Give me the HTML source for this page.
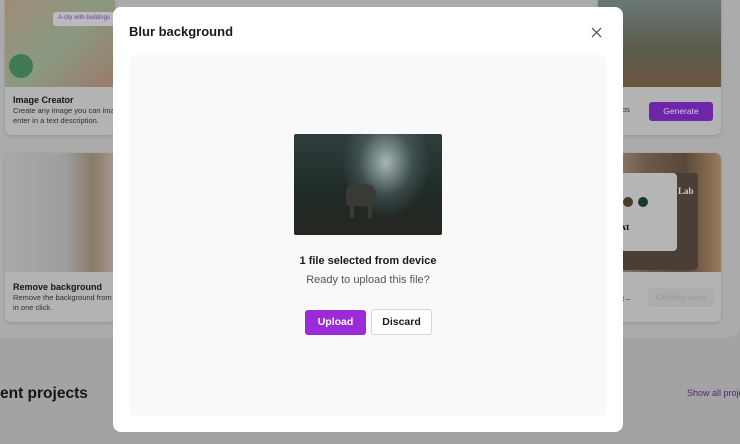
<!DOCTYPE html>
<html><head><style>
*{margin:0;padding:0;box-sizing:border-box}
body{width:740px;height:444px;overflow:hidden;background:#a3a3a3;font-family:"Liberation Sans",sans-serif;position:relative}
.abs{position:absolute}
.card{position:absolute;background:#b3b3b3;border-radius:6px;box-shadow:0 1px 3px rgba(0,0,0,.15);overflow:hidden}
.t{position:absolute;color:#151515;font-size:9px;font-weight:bold}
.s{position:absolute;color:#303030;font-size:7.5px;line-height:10px}
</style></head><body>
<div class="abs" style="left:0;top:0;width:740px;height:338px;background:#ababab;border-bottom-right-radius:14px"></div>
<div class="card" style="left:5px;top:-4px;width:110px;height:139px">
 <div class="abs" style="left:0;top:0;width:110px;height:91px;background:linear-gradient(135deg,#a08a78,#8a9a80 50%,#9a7a6a)"></div>
 <div class="abs" style="left:4px;top:58px;width:24px;height:24px;border-radius:50%;background:#3f7a55"></div>
 <div class="abs" style="left:48px;top:16px;width:62px;height:14px;background:#bdb8c4;border-radius:3px;font-size:6px;color:#5a4a80;padding:3px 0 0 5px">A city with buildings</div>
 <div class="t" style="left:8px;top:99px">Image Creator</div>
 <div class="s" style="left:8px;top:110px">Create any image you can ima<br>enter in a text description.</div>
</div>
<div class="card" style="left:5px;top:153px;width:110px;height:169px">
 <div class="abs" style="left:0;top:0;width:110px;height:119px;background:linear-gradient(90deg,#a9a9a9,#9e9e9e 55%,#8a7a6a 80%,#a59a90)"></div>
 <div class="t" style="left:8px;top:129px">Remove background</div>
 <div class="s" style="left:8px;top:140px">Remove the background from<br>in one click.</div>
</div>
<div class="card" style="left:598px;top:-4px;width:123px;height:139px">
 <div class="abs" style="left:0;top:0;width:123px;height:91px;background:linear-gradient(180deg,#6a7a7a,#5a5a4a 60%,#6a5540)"></div>
 <div class="s" style="left:24px;top:109px">os</div>
 <div class="abs" style="left:51px;top:106px;width:64px;height:19px;background:#6e26a8;border-radius:3px;color:#d9c8e8;font-size:8.5px;text-align:center;line-height:19px">Generate</div>
</div>
<div class="card" style="left:598px;top:153px;width:123px;height:169px">
 <div class="abs" style="left:0;top:0;width:123px;height:119px;background:linear-gradient(90deg,#a08f80,#6a5a4a 40%,#5a4838 70%,#9a7a5a)"></div>
 <div class="abs" style="left:20px;top:20px;width:80px;height:97px;background:#4a3e36;border-radius:4px"></div>
 <div class="abs" style="left:80px;top:33px;color:#d8ccc0;font-family:'Liberation Serif',serif;font-weight:bold;font-size:9px">Lab</div>
 <div class="abs" style="left:0;top:20px;width:79px;height:78px;background:#b6b6b6;border-radius:4px"></div>
 <div class="abs" style="left:10px;top:44px;width:10px;height:10px;border-radius:50%;background:#8a6a2a"></div>
 <div class="abs" style="left:25px;top:44px;width:10px;height:10px;border-radius:50%;background:#4a3a2a"></div>
 <div class="abs" style="left:40px;top:44px;width:10px;height:10px;border-radius:50%;background:#1a3a30"></div>
 <div class="abs" style="left:0;top:69px;color:#0a0a0a;font-family:'Liberation Serif',serif;font-weight:bold;font-size:9px">ling text</div>
 <div class="s" style="left:24px;top:141px">t –</div>
 <div class="abs" style="left:50px;top:135px;width:66px;height:19px;background:#acacac;border-radius:3px;color:#999;font-size:8.5px;text-align:center;line-height:19px">Coming soon</div>
</div>
<div class="abs" style="left:0;top:385px;font-size:15.5px;font-weight:bold;color:#151515">ent projects</div>
<div class="abs" style="left:687px;top:388px;font-size:9px;color:#4a2a70;white-space:nowrap">Show all projects</div>

<div class="abs" style="left:113px;top:7px;width:510px;height:425px;background:#fff;border-radius:8px">
 <div class="abs" style="left:16px;top:17px;font-size:13px;font-weight:bold;color:#1a1a1a">Blur background</div>
 <svg class="abs" style="left:478px;top:20px" width="11" height="11" viewBox="0 0 11 11"><path d="M1 1L10 10M10 1L1 10" stroke="#444" stroke-width="1.2"/></svg>
 <div class="abs" style="left:16px;top:48px;width:478px;height:361px;background:#f9f9f9;border-radius:6px"></div>
 <div class="abs" style="left:181px;top:127px;width:148px;height:101px;border-radius:2px;background:radial-gradient(ellipse 30% 55% at 62% 28%,rgba(190,205,205,.85),rgba(110,130,130,.35) 60%,transparent),linear-gradient(180deg,#2e3e3c,#1e2a28 60%,#262620);overflow:hidden">
  <div class="abs" style="left:52px;top:50px;width:30px;height:22px;background:#3a3a36;border-radius:8px 10px 4px 4px"></div>
  <div class="abs" style="left:56px;top:70px;width:4px;height:14px;background:#3a3a36"></div>
  <div class="abs" style="left:74px;top:70px;width:4px;height:14px;background:#3a3a36"></div>
 </div>
 <div class="abs" style="left:0;top:248px;width:510px;text-align:center;font-size:11px;font-weight:bold;color:#1a1a1a">1 file selected from device</div>
 <div class="abs" style="left:0;top:267px;width:510px;text-align:center;font-size:11px;color:#555">Ready to upload this file?</div>
 <div class="abs" style="left:192px;top:303px;width:61px;height:25px;background:#9b2bd6;border-radius:3px;color:#fff;font-size:10.5px;font-weight:bold;text-align:center;line-height:25px">Upload</div>
 <div class="abs" style="left:258px;top:302px;width:61px;height:26px;background:#fff;border:1px solid #d6d6d6;border-radius:3px;color:#1a1a1a;font-size:10.5px;font-weight:bold;text-align:center;line-height:24px">Discard</div>
</div>
</body></html>
